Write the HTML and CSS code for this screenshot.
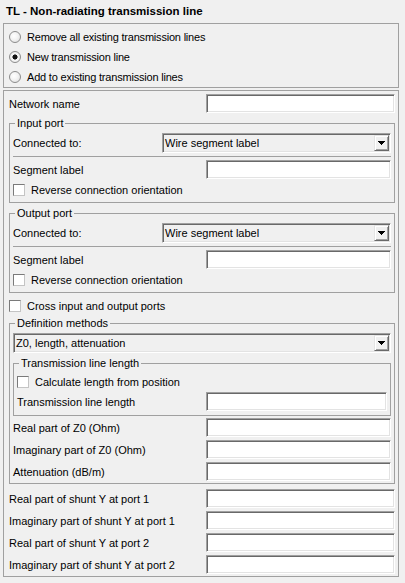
FILE: index.html
```html
<!DOCTYPE html>
<html>
<head>
<meta charset="utf-8">
<link rel="stylesheet" href="styles.css">
</head>
<body>
<div class="title">TL - Non-radiating transmission line</div>
<div class="box radios">
  <div class="opt"><span class="radio"></span>Remove all existing transmission lines</div>
  <div class="opt"><span class="radio on"></span>New transmission line</div>
  <div class="opt"><span class="radio"></span>Add to existing transmission lines</div>
</div>
<div class="box main">
  <div class="row"><span class="lbl">Network name</span><span class="field"></span></div>

  <fieldset class="group port">
    <legend>Input port</legend>
    <div class="row sel-row"><span class="lbl">Connected to:</span><div class="select"><span>Wire segment label</span><span class="btn"><svg width="7" height="4" viewBox="0 0 7 4"><path d="M0 0h7v1h-1v1h-1v1h-1v1h-1v-1h-1v-1h-1v-1h-1z" fill="#000"/></svg></span></div></div>
    <div class="sep"></div>
    <div class="row"><span class="lbl">Segment label</span><span class="field"></span></div>
    <div class="check-row"><span class="check"></span>Reverse connection orientation</div>
  </fieldset>

  <fieldset class="group port">
    <legend>Output port</legend>
    <div class="row sel-row"><span class="lbl">Connected to:</span><div class="select"><span>Wire segment label</span><span class="btn"><svg width="7" height="4" viewBox="0 0 7 4"><path d="M0 0h7v1h-1v1h-1v1h-1v1h-1v-1h-1v-1h-1v-1h-1z" fill="#000"/></svg></span></div></div>
    <div class="sep"></div>
    <div class="row"><span class="lbl">Segment label</span><span class="field"></span></div>
    <div class="check-row"><span class="check"></span>Reverse connection orientation</div>
  </fieldset>

  <div class="check-row cross"><span class="check"></span>Cross input and output ports</div>

  <fieldset class="group def">
    <legend>Definition methods</legend>
    <div class="select full"><span>Z0, length, attenuation</span><span class="btn"><svg width="7" height="4" viewBox="0 0 7 4"><path d="M0 0h7v1h-1v1h-1v1h-1v1h-1v-1h-1v-1h-1v-1h-1z" fill="#000"/></svg></span></div>
    <fieldset class="group trans">
      <legend>Transmission line length</legend>
      <div class="check-row"><span class="check"></span>Calculate length from position</div>
      <div class="row"><span class="lbl">Transmission line length</span><span class="field"></span></div>
    </fieldset>
    <div class="row z0"><span class="lbl">Real part of Z0 (Ohm)</span><span class="field"></span></div>
    <div class="row"><span class="lbl">Imaginary part of Z0 (Ohm)</span><span class="field"></span></div>
    <div class="row"><span class="lbl">Attenuation (dB/m)</span><span class="field"></span></div>
  </fieldset>

  <div class="row shunt"><span class="lbl">Real part of shunt Y at port 1</span><span class="field"></span></div>
  <div class="row"><span class="lbl">Imaginary part of shunt Y at port 1</span><span class="field"></span></div>
  <div class="row"><span class="lbl">Real part of shunt Y at port 2</span><span class="field"></span></div>
  <div class="row"><span class="lbl">Imaginary part of shunt Y at port 2</span><span class="field"></span></div>
</div>
</body>
</html>
```
FILE: styles.css
```css
html, body {
  margin: 0;
  padding: 0;
}
body {
  width: 405px;
  height: 583px;
  overflow: hidden;
  background: #f0f0f0;
  color: #000;
  font-family: "Liberation Sans", Arial, sans-serif;
  font-size: 11px;
}
.title {
  height: 23px;
  line-height: 23px;
  padding-left: 6px;
  font-weight: bold;
  font-size: 11.5px;
}
.box {
  border: 1px solid #a0a0a0;
  margin: 0 6px 0 3px;
}
.radios {
  padding: 3px 0 0 5px;
}
.opt {
  display: flex;
  align-items: center;
  gap: 6px;
  height: 20px;
  white-space: nowrap;
  letter-spacing: -0.2px;
}
.radio {
  flex: none;
  width: 12px;
  height: 12px;
  box-sizing: border-box;
  border-radius: 50%;
  border: 1px solid #8c8c8c;
  background: radial-gradient(circle at 40% 40%, #ffffff 0, #f4f4f4 40%, #dcdcdc 100%);
}
.radio.on {
  background: radial-gradient(circle at 50% 50%, #141414 0, #141414 2.2px, #f8f8f8 2.9px, #e2e2e2 100%);
}
.main {
  margin-top: 2px;
  padding: 3px 3px 2px 5px;
}
.row {
  display: flex;
  align-items: center;
  height: 19px;
}
.row + .row {
  margin-top: 3px;
}
.lbl {
  flex: none;
  white-space: nowrap;
}
.main > .row > .lbl {
  width: 197px;
}
.group .row > .lbl {
  width: 193px;
}
.group .sel-row > .lbl {
  width: 149px;
}
.trans .row > .lbl {
  width: 189px;
}
.field {
  flex: 1;
  height: 19px;
  box-sizing: border-box;
  background: #fff;
  border: 1px solid;
  border-color: #a0a0a0 #ffffff #ffffff #a0a0a0;
  box-shadow: inset 1px 1px 0 #696969, inset -1px -1px 0 #e3e3e3;
}
fieldset.group {
  margin: 4px 0 0;
  padding: 3px 3px 1px 3px;
  border: 1px solid #a0a0a0;
  min-width: 0;
}
legend {
  padding: 0 2px;
  margin-left: 2px;
  line-height: 13px;
}
.sel-row {
  height: 20px;
}
.select {
  flex: 1;
  height: 20px;
  box-sizing: border-box;
  display: flex;
  align-items: center;
  justify-content: space-between;
  padding: 0 1px 0 2px;
  background: #f0f0f0;
  border: 1px solid;
  border-color: #a0a0a0 #ffffff #ffffff #a0a0a0;
  box-shadow: inset 1px 1px 0 #696969, inset -1px -1px 0 #e3e3e3;
  white-space: nowrap;
}
.btn {
  flex: none;
  width: 15px;
  height: 16px;
  box-sizing: border-box;
  display: flex;
  align-items: center;
  justify-content: center;
  background: #f0f0f0;
  border: 1px solid;
  border-color: #e3e3e3 #696969 #696969 #e3e3e3;
  box-shadow: inset 1px 1px 0 #ffffff, inset -1px -1px 0 #a0a0a0;
}
.btn svg {
  display: block;
  shape-rendering: crispEdges;
}
.sep {
  border-top: 1px solid #a0a0a0;
  margin: 3px 0;
}
.check-row {
  display: flex;
  align-items: center;
  gap: 6px;
  height: 22px;
  white-space: nowrap;
}
.check {
  flex: none;
  width: 12px;
  height: 12px;
  box-sizing: border-box;
  background: #fff;
  border: 1px solid;
  border-color: #7a7a7a #c4c4c4 #c4c4c4 #7a7a7a;
}
.cross {
  margin-top: 3px;
  height: 20px;
}
fieldset.def {
  margin-top: 1px;
  padding-bottom: 2px;
}
fieldset.trans {
  margin-top: 4px;
  padding: 2px 3px 4px 3px;
}
.trans .check-row {
  height: 20px;
}
.z0 {
  margin-top: 2px;
}
.shunt {
  margin-top: 5px;
}
```
